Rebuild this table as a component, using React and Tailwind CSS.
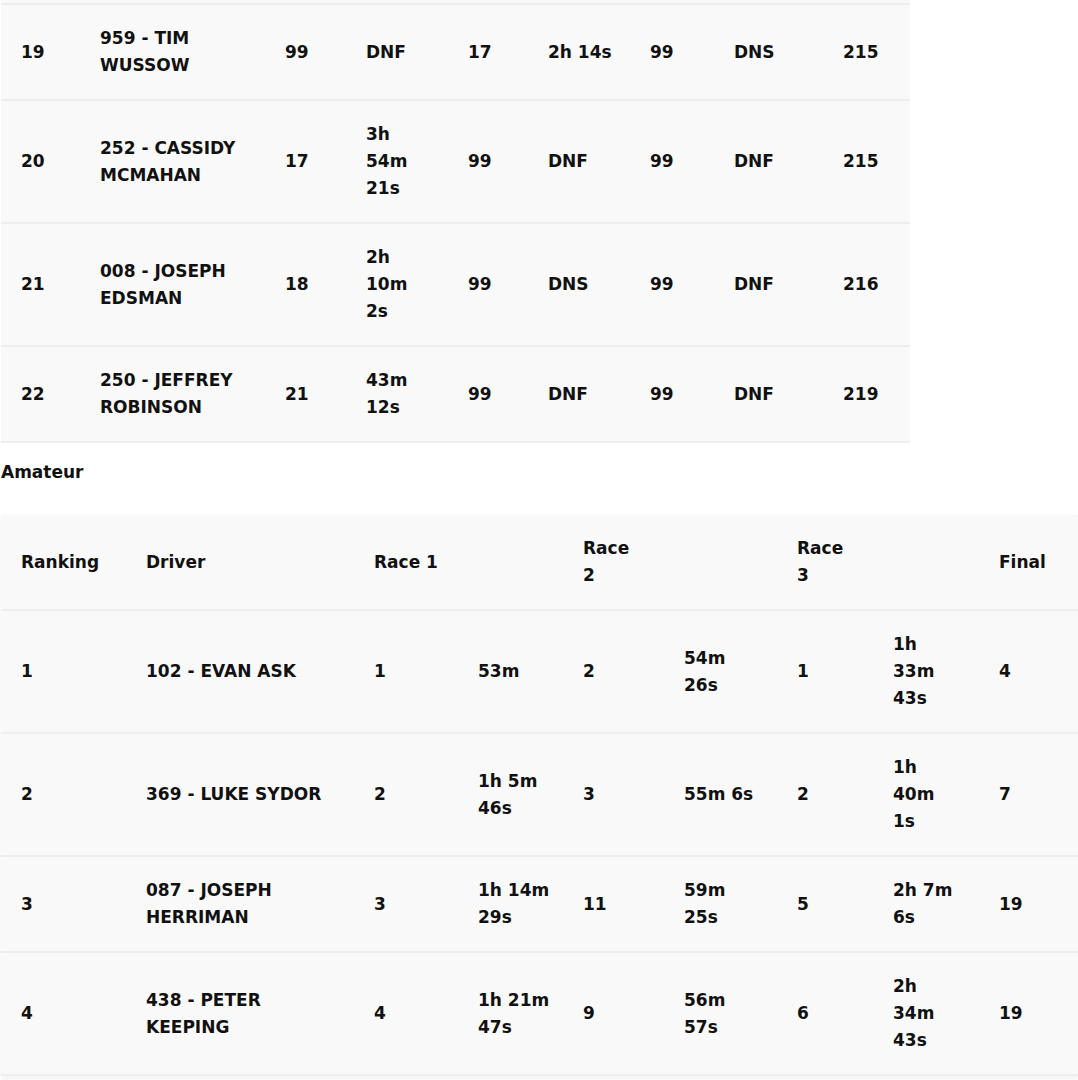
import React from 'react';

// pro class, tail of the list
const proCols = [79, 185, 81, 102, 80, 102, 84, 109, 87];
const proRows = [
  ['19', ['959 - TIM', 'WUSSOW'], '99', 'DNF', '17', '2h 14s', '99', 'DNS', '215'],
  ['20', ['252 - CASSIDY', 'MCMAHAN'], '17', ['3h', '54m', '21s'], '99', 'DNF', '99', 'DNF', '215'],
  ['21', ['008 - JOSEPH', 'EDSMAN'], '18', ['2h', '10m', '2s'], '99', 'DNS', '99', 'DNF', '216'],
  ['22', ['250 - JEFFREY', 'ROBINSON'], '21', ['43m', '12s'], '99', 'DNF', '99', 'DNF', '219'],
];

// amateur class
const amCols = [125, 228, 104, 105, 101, 113, 96, 106, 99];
const amHead = ['Ranking', 'Driver', 'Race 1', '', ['Race', '2'], '', ['Race', '3'], '', 'Final'];
const amRows = [
  ['1', '102 - EVAN ASK', '1', '53m', '2', ['54m', '26s'], '1', ['1h', '33m', '43s'], '4'],
  ['2', '369 - LUKE SYDOR', '2', ['1h 5m', '46s'], '3', '55m 6s', '2', ['1h', '40m', '1s'], '7'],
  ['3', ['087 - JOSEPH', 'HERRIMAN'], '3', ['1h 14m', '29s'], '11', ['59m', '25s'], '5', ['2h 7m', '6s'], '19'],
  ['4', ['438 - PETER', 'KEEPING'], '4', ['1h 21m', '47s'], '9', ['56m', '57s'], '6', ['2h', '34m', '43s'], '19'],
];

const Lines = ({ v }) =>
  Array.isArray(v) ? v.map((l, i) => <span key={i} className="block whitespace-nowrap">{l}</span>) : <span className="whitespace-nowrap">{v}</span>;

const Table = ({ cols, head, rows, className }) => (
  <table className={`table-fixed bg-[#f9f9f9] ${className}`}>
    <colgroup>
      {cols.map((w, i) => (
        <col key={i} style={{ width: w }} />
      ))}
    </colgroup>
    {head && (
      <thead>
        <tr>
          {head.map((h, i) => (
            <th key={i} className="px-5 py-5 text-left align-middle font-bold border-b-2 border-[#eeeeee]">
              <Lines v={h} />
            </th>
          ))}
        </tr>
      </thead>
    )}
    <tbody>
      {rows.map((r, ri) => (
        <tr key={ri}>
          {r.map((c, ci) => (
            <td key={ci} className="px-5 py-5 align-middle border-b-2 border-[#eeeeee]">
              <Lines v={c} />
            </td>
          ))}
        </tr>
      ))}
    </tbody>
  </table>
);

const App = () => {
  return (
    <div className="min-h-screen bg-white text-[#111] text-[17px] leading-[27px] font-bold font-['DejaVu_Sans',sans-serif] pl-px">
      {/* pro table */}
      <div className="w-[909px] bg-[#f9f9f9] pt-[3px]">
        <table className="table-fixed w-[909px]">
          <colgroup>
            {proCols.map((w, i) => (
              <col key={i} style={{ width: w }} />
            ))}
          </colgroup>
          <tbody>
            {proRows.map((r, ri) => (
              <tr key={ri}>
                {r.map((c, ci) => (
                  <td key={ci} className={`px-5 py-5 align-middle border-b-2 border-[#eeeeee] ${ri === 0 ? 'border-t-2' : ''}`}>
                    <Lines v={c} />
                  </td>
                ))}
              </tr>
            ))}
          </tbody>
        </table>
      </div>

      <p className="mt-4 mb-[29px]">Amateur</p>

      {/* amateur table */}
      <Table cols={amCols} head={amHead} rows={amRows} className="w-[1077px] shadow-[0_3px_6px_rgba(0,0,0,0.06)]" />
    </div>
  );
};

export default App;
